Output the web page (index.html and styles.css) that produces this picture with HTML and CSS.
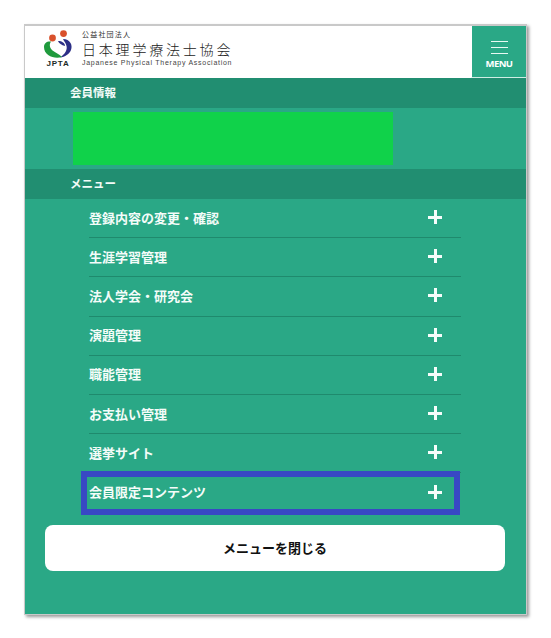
FILE: index.html
```html
<!DOCTYPE html>
<html lang="ja">
<head>
<meta charset="utf-8">
<title>JPTA メニュー</title>
<link rel="stylesheet" href="styles.css">
</head>
<body>
<div class="panel">
  <header class="top">
    <div class="brand">
      <div class="mark">
        <svg class="mark-svg" width="30" height="29" viewBox="0 0 30 29" aria-hidden="true">
          <circle cx="9.5" cy="8" r="3.4" fill="#d9512c"/>
          <circle cx="20.5" cy="3.6" r="3.4" fill="#d9512c"/>
          <path d="M20 9 C27 9 30 15 28 20 C26.5 24 22 27 17 27.5 C22 24 24.5 20 23.5 16 C23 13 21 11.5 20 9 Z" fill="#2c2f86"/>
          <path d="M15 11 C19 11 22 13 22 16 C18.5 15 16 13.5 15 11 Z" fill="#2c2f86"/>
          <path d="M1 17 C1 13 4 11 8 11.5 C6 14 6.5 18 9.5 20.5 C12.5 22.5 16 24 19 27 C12 29.5 1 26 1 17 Z" fill="#1f9a3d"/>
        </svg>
        <span class="mark-label">JPTA</span>
      </div>
      <div class="names">
        <span class="name-small">公益社団法人</span>
        <span class="name-main">日本理学療法士協会</span>
        <span class="name-en">Japanese Physical Therapy Association</span>
      </div>
    </div>
    <button class="menu-btn" type="button">
      <span class="bars"><i></i><i></i><i></i></span>
      <span class="menu-label">MENU</span>
    </button>
  </header>

  <h2 class="bar">会員情報</h2>
  <div class="member"><div class="mask"></div></div>
  <h2 class="bar">メニュー</h2>

  <ul class="list">
    <li class="row"><span>登録内容の変更・確認</span><b class="plus"></b></li>
    <li class="row"><span>生涯学習管理</span><b class="plus"></b></li>
    <li class="row"><span>法人学会・研究会</span><b class="plus"></b></li>
    <li class="row"><span>演題管理</span><b class="plus"></b></li>
    <li class="row"><span>職能管理</span><b class="plus"></b></li>
    <li class="row"><span>お支払い管理</span><b class="plus"></b></li>
    <li class="row"><span>選挙サイト</span><b class="plus"></b></li>
    <li class="row last"><span>会員限定コンテンツ</span><b class="plus"></b><div class="highlight"></div></li>
  </ul>

  <div class="close-wrap"><button class="close" type="button">メニューを閉じる</button></div>
</div>
</body>
</html>
```
FILE: styles.css
```css
* { box-sizing: border-box; }
html, body { margin: 0; padding: 0; background: #fff; }
body {
  width: 551px;
  height: 638px;
  padding: 24px 0 0 24px;
  font-family: "Noto Sans CJK JP", "Liberation Sans", sans-serif;
  overflow: hidden;
}
.panel {
  width: 503px;
  height: 591px;
  background: #2aa886;
  border: 1px solid #c9c9c9;
  border-top-width: 2px;
  box-shadow: 2px 2px 3px #9a9a9a;
  display: flex;
  flex-direction: column;
}
.top {
  height: 52px;
  flex: none;
  background: #fff;
  display: flex;
  justify-content: space-between;
}
.brand { display: flex; padding: 4px 0 0 18px; gap: 9px; }
.mark { width: 30px; display: flex; flex-direction: column; align-items: center; }
.mark-svg { display: block; }
.mark-label {
  font: 700 8px/10px "Liberation Sans", sans-serif;
  color: #1c2a26;
  letter-spacing: 0.8px;
}
.names { display: flex; flex-direction: column; color: #333; }
.name-small { font-size: 7px; line-height: 9px; letter-spacing: 1.2px; margin-bottom: 1px; }
.name-main { font-size: 14px; line-height: 18px; letter-spacing: 2.8px; font-weight: 300; color: #222; }
.name-en { font: 7px/10px "Liberation Sans", sans-serif; letter-spacing: 0.73px; color: #444; }
.menu-btn {
  width: 55px;
  border: 0;
  padding: 15px 0 0;
  background: #2aa886;
  border-left: 1px solid #fff;
  border-bottom: 1px solid #cfeee4;
  display: flex;
  flex-direction: column;
  align-items: center;
  color: #fff;
}
.bars { display: flex; flex-direction: column; gap: 5px; width: 17px; }
.bars i { display: block; height: 1px; background: #e8f8f2; }
.menu-label { font: 700 9.5px/12px "Open Sans", "Liberation Sans", sans-serif; margin-top: 4px; letter-spacing: -0.6px; }
.bar {
  margin: 0;
  height: 30px;
  flex: none;
  background: #218e71;
  color: #f2fbf8;
  font-size: 11.5px;
  font-weight: 700;
  line-height: 29px;
  padding-left: 45px;
}
.member { height: 61px; flex: none; padding: 4px 0 0 48px; }
.mask { width: 320px; height: 53px; background: #10d24a; }
.list { list-style: none; margin: 0 0 0 64px; padding: 0; width: 372px; }
.row {
  position: relative;
  height: 39.2px;
  display: flex;
  align-items: center;
  justify-content: space-between;
  border-bottom: 1px solid #1f8a6d;
  color: #f4fcf9;
  font-size: 13px;
  font-weight: 700;
  padding-bottom: 2px;
}
.row.last { border-bottom: 0; }
.plus { position: relative; width: 14px; height: 14px; margin-right: 19px; }
.plus::before, .plus::after { content: ""; position: absolute; background: #f6fdfb; }
.plus::before { left: 0; right: 0; top: 6px; height: 3px; }
.plus::after { top: 0; bottom: 0; left: 6px; width: 3px; }
.highlight {
  position: absolute;
  left: -8px;
  top: -2px;
  width: 379px;
  height: 44px;
  border: 6px solid #3848c4;
  pointer-events: none;
}
.close-wrap { padding: 12.4px 20px 0; }
.close {
  display: block;
  width: 460px;
  height: 46px;
  border: 0;
  border-radius: 8px;
  background: #fff;
  color: #111;
  font-family: inherit;
  font-size: 13px;
  font-weight: 700;
}
```
